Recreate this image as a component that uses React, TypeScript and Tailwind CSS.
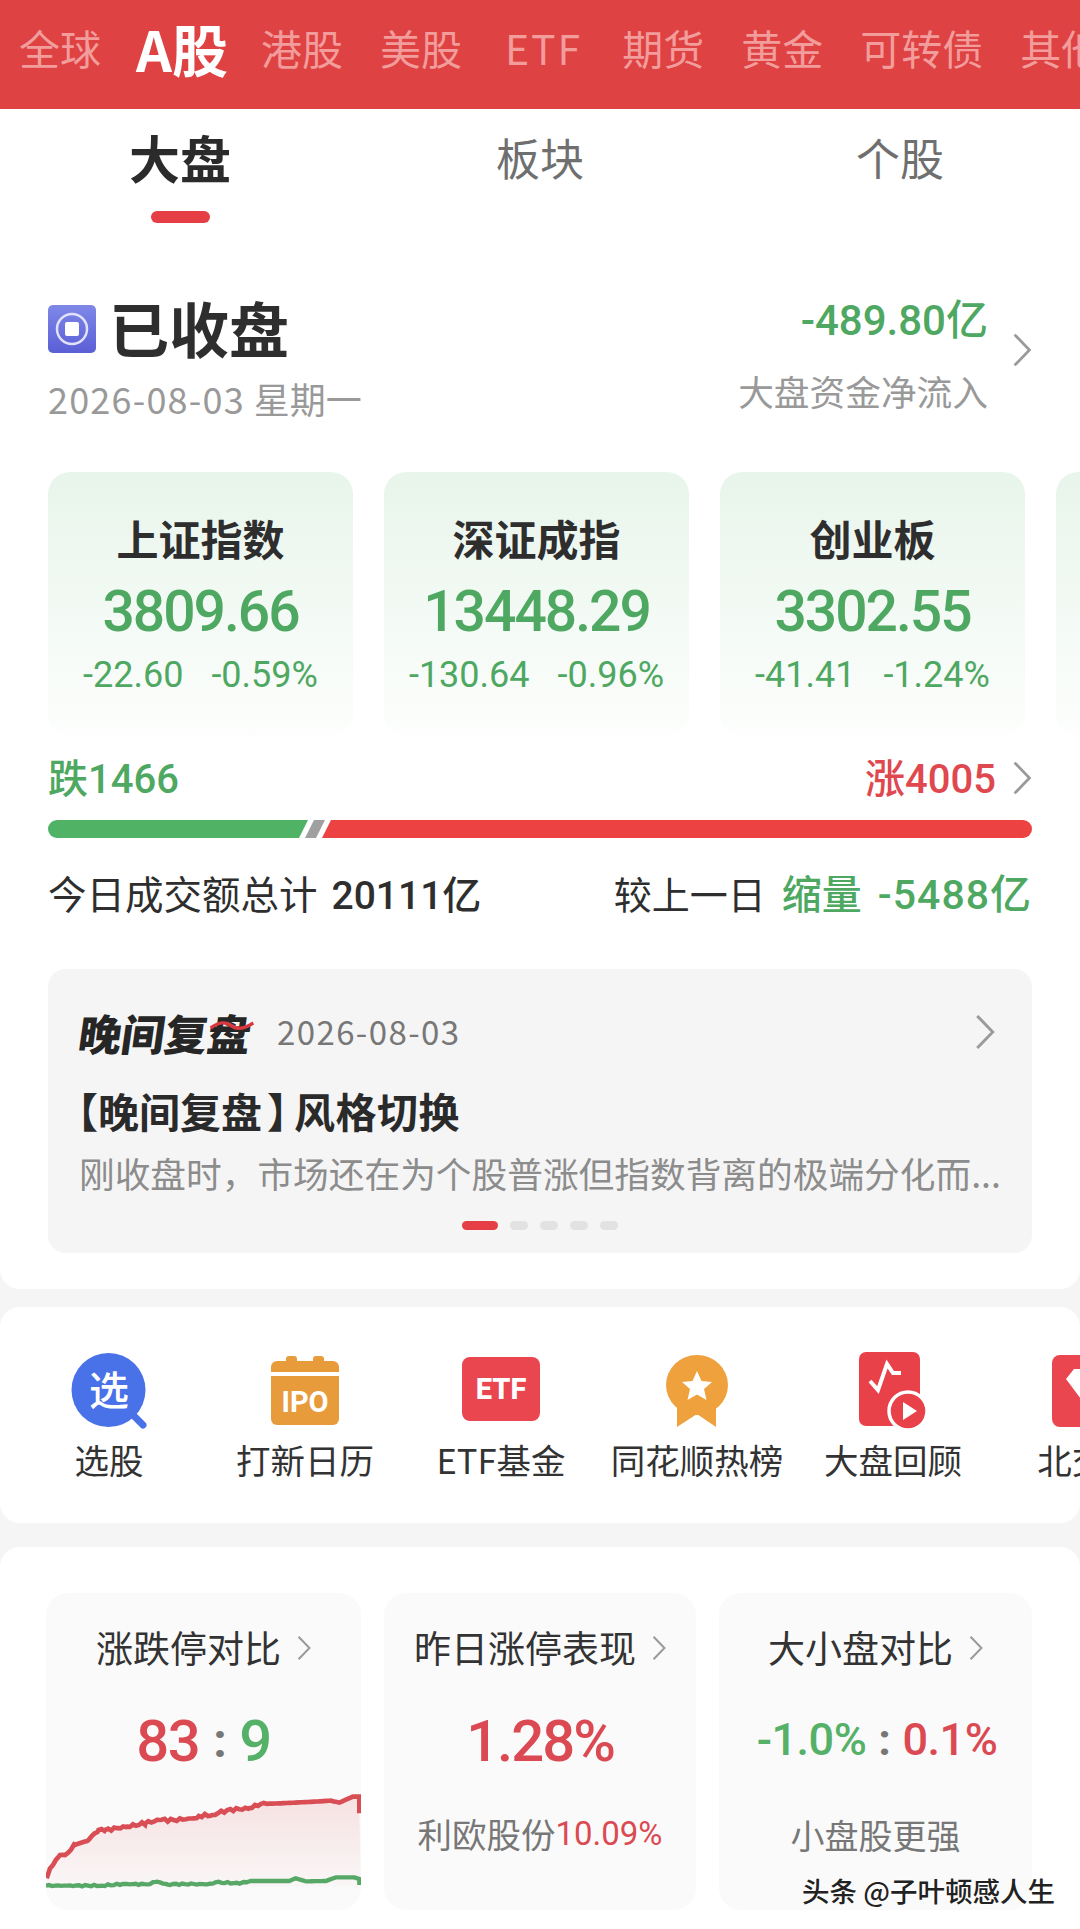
const cjk = "font-['Noto_Sans_CJK_SC','Noto_Sans',sans-serif]";
const num = "font-['Roboto','Noto_Sans_CJK_SC',sans-serif]";

const Chevron = ({ className }: { className: string }) => (
  <svg viewBox="0 0 18 32" fill="none" className={className}>
    <path d="M2 1.5 L16 16 L2 30.5" stroke="#9a9a9a" strokeWidth="2.6" />
  </svg>
);

const marketTabs = ['全球', 'A股', '港股', '美股', 'ETF', '期货', '黄金', '可转债', '其他'];

const indexes = [
  { name: '上证指数', value: '3809.66', diff: '-22.60', pct: '-0.59%' },
  { name: '深证成指', value: '13448.29', diff: '-130.64', pct: '-0.96%' },
  { name: '创业板', value: '3302.55', diff: '-41.41', pct: '-1.24%' },
  { name: '', value: '', diff: '', pct: '' },
];

const SearchIcon = () => (
  <svg viewBox="0 0 76 76" className="w-[76px] h-[76px]">
    <path d="M60 60 L72 72" stroke="#4a72e8" strokeWidth="7" strokeLinecap="round" />
    <circle cx="37.5" cy="37" r="37" fill="#4a72e8" />
    <text x="38" y="52" textAnchor="middle" fill="#fff" fontSize="40" fontWeight="500" fontFamily="Noto Sans CJK SC">选</text>
  </svg>
);

const IpoIcon = () => (
  <svg viewBox="0 0 68 70" className="w-[68px] h-[70px]">
    <rect x="15" y="0" width="11" height="10" rx="3" fill="#e89b3a" />
    <rect x="42" y="0" width="11" height="10" rx="3" fill="#e89b3a" />
    <path d="M0 16 V11 a6 6 0 0 1 6 -6 H62 a6 6 0 0 1 6 6 V16 Z" fill="#e89b3a" />
    <path d="M0 20 H68 V63 a6 6 0 0 1 -6 6 H6 a6 6 0 0 1 -6 -6 Z" fill="#e89b3a" />
    <text x="34" y="56" textAnchor="middle" fill="#fff" fontSize="29" fontWeight="700" fontFamily="Roboto">IPO</text>
  </svg>
);

const EtfIcon = () => (
  <svg viewBox="0 0 78 64" className="w-[78px] h-[64px] mb-[4px]">
    <rect width="78" height="64" rx="8" fill="#e9464f" />
    <text x="39" y="42" textAnchor="middle" fill="#fff" fontSize="29" fontWeight="800" fontFamily="Roboto">ETF</text>
  </svg>
);

const MedalIcon = () => (
  <svg viewBox="0 0 62 73" className="w-[62px] h-[73px]">
    <path d="M11 45 V72 L31 59 L50 72 V45 Z" fill="#eea13c" />
    <ellipse cx="31" cy="30" rx="31" ry="30" fill="#eea13c" />
    <path d="M31 16 L35.5 26 L46 27 L38 34 L40.5 45 L31 39.5 L21.5 45 L24 34 L16 27 L26.5 26 Z" fill="#fff" />
  </svg>
);

const ReplayIcon = () => (
  <svg viewBox="0 0 68 78" className="w-[68px] h-[78px]">
    <rect width="61" height="74" rx="7" fill="#e8414a" />
    <path d="M11 29 L19 38 L28 12 L34 21 H42" fill="none" stroke="#fff" strokeWidth="4" />
    <circle cx="49" cy="59" r="19" fill="#e8414a" stroke="#fff" strokeWidth="3.5" />
    <path d="M44 50 L58 59 L44 68 Z" fill="#fff" />
  </svg>
);

const BjIcon = () => (
  <svg viewBox="0 0 78 72" className="w-[78px] h-[72px] ml-[4px]">
    <rect width="78" height="72" rx="8" fill="#e9464f" />
    <path d="M14 24 L22 14 H42 L50 24 L32 48 Z" fill="#fff" />
  </svg>
);

const shortcuts = [
  { label: '选股', icon: <SearchIcon /> },
  { label: '打新日历', icon: <IpoIcon /> },
  { label: 'ETF基金', icon: <EtfIcon /> },
  { label: '同花顺热榜', icon: <MedalIcon /> },
  { label: '大盘回顾', icon: <ReplayIcon /> },
  { label: '北交所', icon: <BjIcon /> },
];

const redPts = [[50,295],[60,265],[90,225],[105,225],[135,195],[175,180],[205,150],[225,150],[290,140],[345,130],[385,120],[430,120],[490,115],[505,108],[545,105],[590,90],[655,85],[690,72],[750,70],[850,65],[900,62],[925,68],[965,50],[985,50],[985,100]];
const greenPts = [[48,317],[215,317],[280,312],[350,313],[380,305],[410,313],[490,312],[530,313],[555,307],[630,310],[660,303],[775,303],[795,295],[825,304],[885,303],[915,292],[970,292],[985,297],[985,315]];

// wobble the sampled points a little, the real series is noisy
const jag = (pts: number[][], amp: number, until: number) => {
  const out: string[] = [];
  pts.forEach(([x, y], i) => {
    out.push(`${x},${y}`);
    const next = pts[i + 1];
    if (!next || next[0] === x) return;
    for (let px = x + 9; px < next[0]; px += 9) {
      const t = (px - x) / (next[0] - x);
      const wob = px < until ? amp * Math.sin(px * 1.3) * Math.sin(px * 0.37) : 0;
      out.push(`${px},${(y + (next[1] - y) * t + wob).toFixed(1)}`);
    }
  });
  return out.join(' ');
};
const redLine = jag(redPts, 5, 700);
const greenLine = jag(greenPts, 2.5, 650);

const LimitChart = () => (
  <svg viewBox="48 0 942 390" preserveAspectRatio="none" className="w-[315px] h-[130px] block">
    <defs>
      <linearGradient id="redFill" x1="0" y1="0" x2="0" y2="1">
        <stop offset="0" stopColor="#e0484f" stopOpacity="0.14" />
        <stop offset="1" stopColor="#e0484f" stopOpacity="0.02" />
      </linearGradient>
    </defs>
    <polygon points={`48,320 ${redLine} 990,320`} fill="url(#redFill)" />
    <polyline points={redLine} fill="none" stroke="#d94d55" strokeWidth="14" />
    <polyline points={greenLine} fill="none" stroke="#57a866" strokeWidth="13" />
  </svg>
);

export default function App() {
  return (
    <div className={`relative w-[1080px] h-[1929px] overflow-hidden bg-[#f5f5f5] ${cjk}`}>
      {/* Market tabs */}
      <div className="h-[109px] bg-[#de4242] flex items-center pl-[19px] pb-[14px] gap-[37px] whitespace-nowrap overflow-hidden">
        {marketTabs.map((t) =>
          t === 'A股' ? (
            <span key={t} className="text-[56px] font-bold text-white leading-none -ml-[2px] -mr-[4px]">{t}</span>
          ) : t === 'ETF' ? (
            <span key={t} className="text-[41px] tracking-[2px] ml-[6px] mr-[3px] text-[#f29c9c] leading-none">{t}</span>
          ) : (
            <span key={t} className="text-[41px] text-[#f29c9c] leading-none">{t}</span>
          ),
        )}
      </div>

      <div className="bg-white rounded-b-[20px] pb-[36px]">
        {/* Sub tabs */}
        <div className="grid grid-cols-3 h-[114px]">
          <div className="flex flex-col items-center">
            <div className="h-[96px] flex items-center text-[51px] font-bold text-[#2b2b2b]">大盘</div>
            <div className="mt-[6px] w-[59px] h-[12px] rounded-full bg-[#e53e45]" />
          </div>
          <div className="h-[96px] flex items-center justify-center text-[44px] text-[#6f6f6f]">板块</div>
          <div className="h-[96px] flex items-center justify-center text-[44px] text-[#6f6f6f]">个股</div>
        </div>

        {/* Close status */}
        <div className="mt-[77px] px-[48px] flex justify-between h-[120px]">
          <div>
            <div className="h-[60px] flex items-center gap-[13px]">
              <svg viewBox="0 0 48 48" className="w-[48px] h-[48px] mb-[2px]">
                <defs>
                  <linearGradient id="stopBg" x1="0" y1="0" x2="0" y2="1">
                    <stop offset="0" stopColor="#7f88e8" />
                    <stop offset="1" stopColor="#5a5fd6" />
                  </linearGradient>
                </defs>
                <rect width="48" height="48" rx="5" fill="url(#stopBg)" />
                <circle cx="24" cy="24" r="15" fill="none" stroke="#dfe2fa" strokeWidth="2.5" />
                <rect x="17" y="17" width="14" height="14" rx="2" fill="#fff" />
              </svg>
              <span className="text-[60px] font-bold text-[#2e2e2e] leading-none pb-[7px]">已收盘</span>
            </div>
            <div className="mt-[23px] h-[30px] flex items-center text-[36px] text-[#999999] whitespace-nowrap">
              <span className="tracking-[1.2px] mr-[9px]">2026-08-03</span>星期一
            </div>
          </div>
          <div className="flex items-center gap-[24px]">
            <div className="flex flex-col items-end pb-[11px]">
              <div className={`h-[40px] flex items-center text-[42px] font-medium text-[#4ea862] ${num}`}>-489.80亿</div>
              <div className="mt-[32px] h-[36px] flex items-center text-[35.7px] text-[#999999]">大盘资金净流入</div>
            </div>
            <Chevron className="w-[20px] h-[34px] mb-[20px]" />
          </div>
        </div>

        {/* Index cards */}
        <div className="mt-[52px] pl-[48px] flex gap-[31px] overflow-hidden">
          {indexes.map((c, i) => (
            <div key={i} className="w-[305px] shrink-0 h-[265px] rounded-[22px] bg-linear-to-b from-[#e8f5eb] to-[#fdfefd] flex flex-col items-center pt-[43px]">
              <div className="h-[44px] flex items-center text-[42px] font-bold text-[#2e2e2e] whitespace-nowrap">{c.name}</div>
              <div className={`mt-[30px] h-[46px] flex items-center text-[57px] font-medium tracking-[-2px] text-[#4ea862] ${num}`}>{c.value}</div>
              <div className={`mt-[25px] h-[30px] flex items-center gap-[28px] text-[36px] text-[#4ea862] ${num}`}>
                <span>{c.diff}</span>
                <span>{c.pct}</span>
              </div>
            </div>
          ))}
        </div>

        {/* Advance / decline */}
        <div className="mt-[21px] mx-[48px] h-[40px] pt-[4px] flex items-center justify-between">
          <span className={`text-[40px] font-medium text-[#4ea862] ${num}`}>跌1466</span>
          <div className="flex items-center gap-[16px]">
            <span className={`text-[40px] font-medium text-[#e0484f] ${num}`}>涨4005</span>
            <Chevron className="w-[20px] h-[34px] mb-[4px]" />
          </div>
        </div>
        <div className="mt-[22px] mx-[48px] flex h-[18px]">
          <div className="w-[260px] rounded-l-[9px] bg-[#4fb265] [clip-path:polygon(0_0,100%_0,calc(100%-9px)_100%,0_100%)]" />
          <div className="w-[20px] -ml-[3px] bg-[#a0a0a0] [clip-path:polygon(9px_0,100%_0,calc(100%-9px)_100%,0_100%)]" />
          <div className="flex-1 -ml-[3px] rounded-r-[9px] bg-[#ec4242] [clip-path:polygon(9px_0,100%_0,100%_100%,0_100%)]" />
        </div>

        {/* Turnover */}
        <div className="mt-[34px] mx-[48px] h-[40px] flex items-baseline justify-between whitespace-nowrap">
          <div className="flex items-baseline text-[38.5px] leading-[40px] text-[#2e2e2e]">
            <span>今日成交额总计</span>
            <span className={`ml-[14px] text-[39px] font-medium ${num}`}>20111亿</span>
          </div>
          <div className="flex items-baseline text-[38px] leading-[40px] text-[#2e2e2e]">
            <span>较上一日</span>
            <span className="ml-[16px] text-[40px] font-medium text-[#4ea862]">缩量</span>
            <span className={`ml-[16px] text-[41px] font-medium tracking-[1px] text-[#4ea862] ${num}`}>-5488亿</span>
          </div>
        </div>

        {/* Evening review */}
        <div className="mt-[57px] mx-[48px] h-[284px] rounded-[18px] bg-[#f5f5f5] pt-[41px] px-[31px]">
          <div className="h-[44px] flex items-center relative">
            <span className="relative -skew-x-[8deg] text-[43px] font-black text-[#262626] leading-none whitespace-nowrap">
              晚间复盘
              <svg viewBox="0 0 44 12" className="absolute right-[-2px] top-[9px] w-[44px] h-[12px]">
                <path d="M1 8 C10 1 16 2 22 6 C28 10 36 8 43 3" fill="none" stroke="#d9383e" strokeWidth="3.5" />
              </svg>
            </span>
            <span className="ml-[26px] text-[33px] tracking-[1.4px] text-[#777777] whitespace-nowrap">2026-08-03</span>
            <Chevron className="absolute right-[6px] top-[4px] w-[20px] h-[36px]" />
          </div>
          <div className="mt-[35px] h-[44px] flex items-center text-[41px] font-bold text-[#2a2a2a] -ml-[22px] whitespace-nowrap">
            <span>【晚间复盘</span>
            <span className="ml-[5px] -mr-[14px]">】</span>
            <span className="tracking-[0.5px]">风格切换</span>
          </div>
          <div className="mt-[22px] h-[36px] flex items-center text-[35.7px] text-[#8c8c8c] whitespace-nowrap">刚收盘时，市场还在为个股普涨但指数背离的极端分化而...</div>
          <div className="mt-[30px] h-[9px] flex justify-center gap-[12px]">
            <div className="w-[36px] rounded-full bg-[#e53e45]" />
            <div className="w-[18px] rounded-full bg-[#e2e2e2]" />
            <div className="w-[18px] rounded-full bg-[#e2e2e2]" />
            <div className="w-[18px] rounded-full bg-[#e2e2e2]" />
            <div className="w-[18px] rounded-full bg-[#e2e2e2]" />
          </div>
        </div>
      </div>

      {/* Shortcuts */}
      <div className="mt-[18px] h-[216px] bg-white rounded-[20px] pl-[11px] pt-[44px] flex overflow-hidden">
        {shortcuts.map((s) => (
          <div key={s.label} className="w-[196px] shrink-0 flex flex-col items-center">
            <div className="h-[80px] flex items-center justify-center">{s.icon}</div>
            <div className="mt-[11px] h-[36px] flex items-center text-[34.5px] text-[#333333] whitespace-nowrap">{s.label}</div>
          </div>
        ))}
      </div>

      {/* Comparison cards */}
      <div className="mt-[24px] h-[382px] bg-white rounded-t-[20px] pl-[46px] pt-[46px] flex gap-[23px]">
        <div className="w-[315px] h-[317px] rounded-[22px] bg-[#fafafa] overflow-hidden flex flex-col items-center">
          <div className="mt-[35px] h-[40px] flex items-center gap-[16px]">
            <span className="text-[37px] text-[#333333]">涨跌停对比</span>
            <Chevron className="w-[14px] h-[26px]" />
          </div>
          <div className={`mt-[50px] h-[46px] flex items-center gap-[14px] text-[58px] font-medium tracking-[-1.5px] ${num}`}>
            <span className="text-[#db4a52]">83</span>
            <span className="text-[#777777] text-[48px] font-bold">:</span>
            <span className="text-[#55b068]">9</span>
          </div>
          <div className="mt-auto"><LimitChart /></div>
        </div>

        <div className="w-[312px] h-[317px] rounded-[22px] bg-[#fafafa] flex flex-col items-center">
          <div className="mt-[35px] h-[40px] flex items-center gap-[16px]">
            <span className="text-[37px] text-[#333333] whitespace-nowrap">昨日涨停表现</span>
            <Chevron className="w-[14px] h-[26px]" />
          </div>
          <div className={`mt-[50px] h-[46px] flex items-center text-[58px] font-medium tracking-[-2px] text-[#db4a52] ${num}`}>1.28%</div>
          <div className="mt-[52px] h-[36px] flex items-center text-[34.5px] text-[#777777] whitespace-nowrap">
            利欧股份<span className={`text-[33px] text-[#db4a52] ${num}`}>10.09%</span>
          </div>
        </div>

        <div className="w-[313px] h-[317px] rounded-[22px] bg-[#fafafa] flex flex-col items-center">
          <div className="mt-[35px] h-[40px] flex items-center gap-[16px]">
            <span className="text-[37px] text-[#333333] whitespace-nowrap">大小盘对比</span>
            <Chevron className="w-[14px] h-[26px]" />
          </div>
          <div className={`mt-[49px] h-[46px] flex items-center gap-[12px] pl-[3px] text-[45px] font-medium tracking-[-0.5px] ${num}`}>
            <span className="text-[#55b068]">-1.0%</span>
            <span className="text-[#777777] font-bold">:</span>
            <span className="text-[#db4a52]">0.1%</span>
          </div>
          <div className="mt-[53px] h-[36px] flex items-center text-[34px] text-[#777777]">小盘股更强</div>
        </div>
      </div>

      {/* Watermark */}
      <div className="absolute left-[802px] top-[1873px] text-[27.5px] font-medium leading-[34px] text-[#222222] whitespace-nowrap [text-shadow:0_0_3px_#fff,0_0_3px_#fff,0_0_2px_#fff]">头条 @子叶顿感人生</div>
    </div>
  );
}
